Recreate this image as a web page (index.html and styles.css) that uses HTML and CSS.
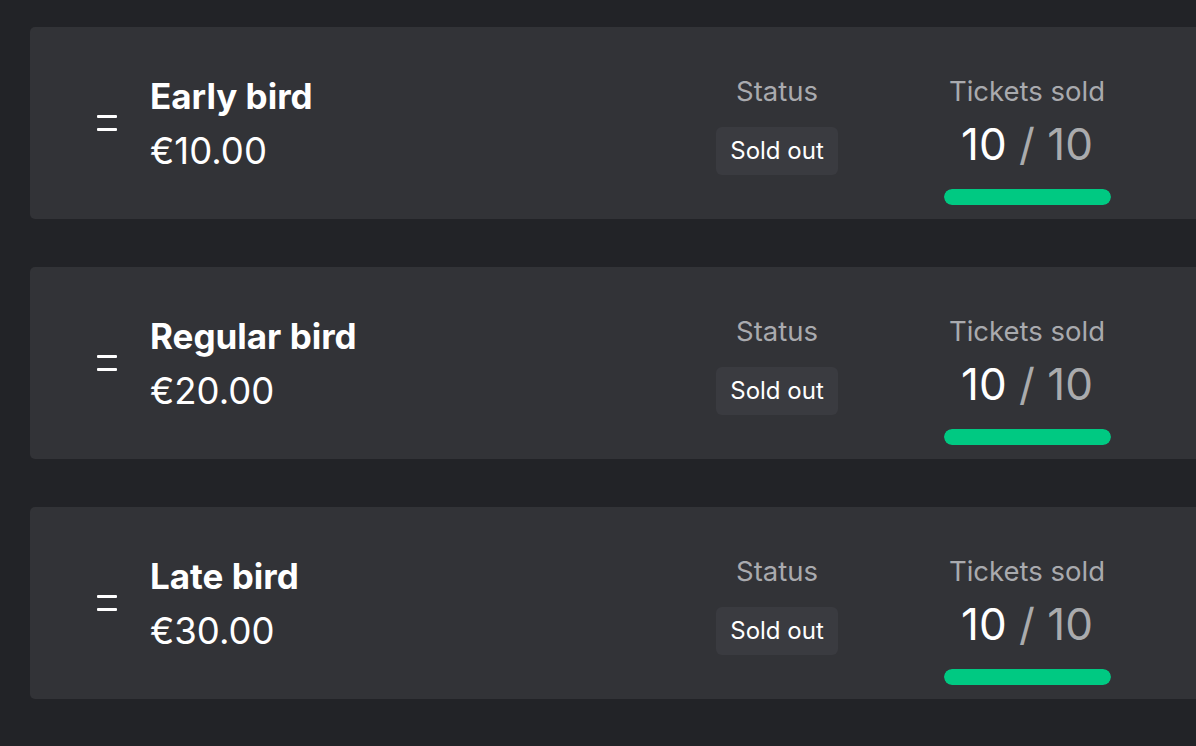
FILE: index.html
```html
<!DOCTYPE html>
<html>
<head>
<meta charset="utf-8">
<link rel="stylesheet" href="styles.css">
</head>
<body>
<div class="list">
  <div class="card">
    <div class="drag"><span></span><span></span></div>
    <div class="info">
      <div class="name">Early bird</div>
      <div class="price">€10.00</div>
    </div>
    <div class="col status">
      <div class="label">Status</div>
      <div class="badge">Sold out</div>
    </div>
    <div class="col tickets">
      <div class="label">Tickets sold</div>
      <div class="count"><span class="sold">10</span> <span class="total">/ 10</span></div>
      <div class="bar"><div class="fill" style="width:100%"></div></div>
    </div>
  </div>
  <div class="card">
    <div class="drag"><span></span><span></span></div>
    <div class="info">
      <div class="name">Regular bird</div>
      <div class="price">€20.00</div>
    </div>
    <div class="col status">
      <div class="label">Status</div>
      <div class="badge">Sold out</div>
    </div>
    <div class="col tickets">
      <div class="label">Tickets sold</div>
      <div class="count"><span class="sold">10</span> <span class="total">/ 10</span></div>
      <div class="bar"><div class="fill" style="width:100%"></div></div>
    </div>
  </div>
  <div class="card">
    <div class="drag"><span></span><span></span></div>
    <div class="info">
      <div class="name">Late bird</div>
      <div class="price">€30.00</div>
    </div>
    <div class="col status">
      <div class="label">Status</div>
      <div class="badge">Sold out</div>
    </div>
    <div class="col tickets">
      <div class="label">Tickets sold</div>
      <div class="count"><span class="sold">10</span> <span class="total">/ 10</span></div>
      <div class="bar"><div class="fill" style="width:100%"></div></div>
    </div>
  </div>
</div>
</body>
</html>
```
FILE: styles.css
```css
html, body {
  margin: 0;
  padding: 0;
  background: #222327;
  overflow: hidden;
  height: 100%;
}
body {
  font-family: Inter, "Noto Sans", sans-serif;
  color: #ffffff;
}
.list {
  display: flex;
  flex-direction: column;
  gap: 48px;
  padding: 27px 0 0 30px;
  width: 1300px;
}
.card {
  box-sizing: border-box;
  height: 192px;
  background: #323337;
  border-radius: 5px;
  display: flex;
  align-items: flex-start;
  padding: 48px 203px 0 67px;
}
.drag {
  align-self: center;
  display: flex;
  flex-direction: column;
  gap: 10px;
  width: 20px;
  margin-right: 33px;
  margin-top: -48px;
}
.drag span {
  display: block;
  height: 3px;
  background: #ffffff;
  border-radius: 1px;
}
.info {
  flex: 1;
  display: flex;
  flex-direction: column;
}
.name {
  font-size: 35px;
  font-weight: 700;
  line-height: 42px;
}
.price {
  font-size: 36.5px;
  font-weight: 400;
  line-height: 44px;
  margin-top: 12px;
}
.col {
  display: flex;
  flex-direction: column;
  align-items: center;
}
.status {
  width: 160px;
}
.tickets {
  width: 200px;
  margin-left: 70px;
}
.label {
  font-size: 27.5px;
  line-height: 32px;
  color: #a9aaae;
}
.badge {
  margin-top: 20px;
  height: 48px;
  line-height: 48px;
  padding: 0 14px;
  background: #3a3b40;
  border-radius: 6px;
  font-size: 24px;
  color: #ffffff;
}
.count {
  margin-top: 11px;
  font-size: 44px;
  line-height: 52px;
  white-space: nowrap;
}
.sold {
  color: #ffffff;
}
.total {
  color: #aaabad;
}
.bar {
  margin-top: 19px;
  width: 167px;
  height: 16px;
  border-radius: 8px;
  background: #3a3b40;
  overflow: hidden;
}
.fill {
  height: 100%;
  background: #00c982;
  border-radius: 8px;
}
```
